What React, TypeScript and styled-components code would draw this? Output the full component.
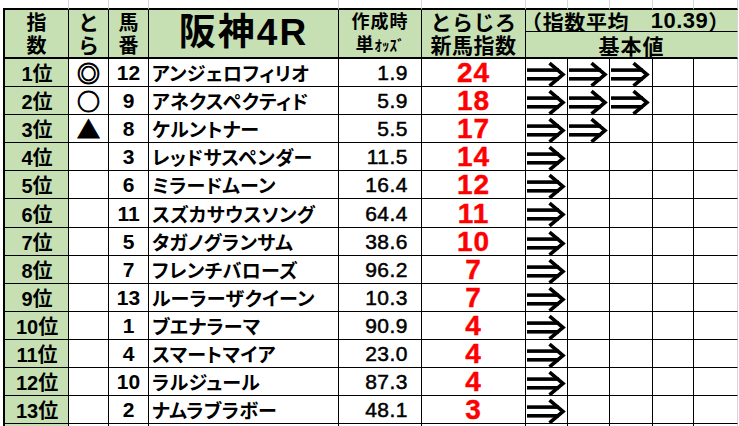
import React from "react";
import styled, { createGlobalStyle } from "styled-components";

const GREEN = "#c6e0b4";
const LINE = "#000";
const GRIDLINE = "#d6d6d6";

const GlobalStyle = createGlobalStyle`
  html, body { margin: 0; padding: 0; background: #fff; }
  body {
    font-family: "Liberation Sans", "Noto Sans CJK JP", sans-serif;
    font-weight: 700;
    color: #000;
    overflow: hidden;
  }
`;

const Sheet = styled.div`
  display: grid;
  grid-template-columns: 66px 40px 40px 190px 83px 104px 42px 42px 43px 41px 44px;
  grid-template-rows: 10px 22px 27px repeat(13, 28.1px) 14px;
  margin-left: 3px;
  width: 735px;
`;

const Base = styled.div<{ $edge?: boolean }>`
  box-sizing: border-box;
  display: flex;
  align-items: center;
  justify-content: center;
  min-width: 0;
  white-space: nowrap;
  border-right: 1px solid ${(p) => (p.$edge ? GRIDLINE : LINE)};
  border-bottom: 1px solid ${LINE};
`;

const GutterCell = styled.div`
  box-sizing: border-box;
  border-right: 1px solid ${GRIDLINE};
  border-bottom: 2px solid ${LINE};
`;

const HeadCell = styled(Base)<{ $lead?: boolean }>`
  grid-row: span 2;
  background: ${GREEN};
  border-bottom-width: 2px;
  border-left: ${(p) => (p.$lead ? `2px solid ${LINE}` : "none")};
`;

const Stack = styled.div<{ $size: number; $lh: number; $ls?: number }>`
  display: flex;
  flex-direction: column;
  align-items: center;
  font-family: "Noto Sans CJK JP", sans-serif;
  font-size: ${(p) => p.$size}px;
  line-height: ${(p) => p.$lh}px;
  letter-spacing: ${(p) => p.$ls ?? 0}px;
  margin-top: -2px;
`;

const Title = styled.div`
  font-family: "Liberation Sans", "Noto Sans CJK JP", sans-serif;
  font-size: 37px;
  letter-spacing: 2px;
  line-height: 1;
  margin-top: -2px;
`;

const Half = styled.span`
  font-size: 15px;
  letter-spacing: 0;
`;

const AvgCell = styled(Base)`
  grid-column: span 5;
  background: ${GREEN};
  font-size: 21px;
  letter-spacing: 0.6px;
  padding-right: 12px;
  font-family: "Liberation Sans", "Noto Sans CJK JP", sans-serif;
`;

const AvgNum = styled.span`
  font-size: 22px;
  letter-spacing: 0.5px;
`;

const BasisCell = styled(Base)`
  grid-column: span 5;
  background: ${GREEN};
  border-bottom-width: 2px;
  font-family: "Noto Sans CJK JP", sans-serif;
  font-size: 21px;
  letter-spacing: 1px;
`;

const RankCell = styled(Base)`
  background: ${GREEN};
  border-left: 2px solid ${LINE};
  font-size: 20px;
  padding-left: 1px;
`;

const MarkCell = styled(Base)`
  font-family: "Noto Sans CJK JP", sans-serif;
  font-size: 23px;
  line-height: 1;
  -webkit-text-stroke: 0.9px #000;
`;

const NumCell = styled(Base)`
  font-size: 21px;
  padding-top: 1px;
`;

const NameCell = styled(Base)`
  justify-content: flex-start;
  padding-left: 3px;
  font-family: "Noto Sans CJK JP", sans-serif;
  font-size: 19px;
  font-feature-settings: "palt";
  letter-spacing: 0.3px;
`;

const OddsCell = styled(Base)`
  justify-content: flex-end;
  padding-right: 13px;
  font-size: 21px;
  font-weight: 400;
  -webkit-text-stroke: 0.5px #000;
  letter-spacing: 0.5px;
  padding-top: 1px;
`;

const ScoreCell = styled(Base)`
  color: #ff0000;
  font-size: 28px;
  letter-spacing: 1px;
  padding-top: 1px;
  -webkit-text-stroke: 0.4px #ff0000;
`;

const ArrowCell = styled(Base)`
  justify-content: flex-start;
  align-items: flex-start;
  overflow: visible;
`;

const ArrowSvg = styled.svg`
  display: block;
  margin: 3px 0 0 1px;
  overflow: visible;
`;

const Arrow = () => (
  <ArrowSvg width="38" height="25" viewBox="0 0 38 25">
    <rect x="0" y="6.3" width="32" height="3.6" fill="#000" />
    <rect x="0" y="15" width="32" height="3.6" fill="#000" />
    <polyline
      points="22.5,1.2 36,12.5 22.5,23.8"
      fill="none"
      stroke="#000"
      strokeWidth="3.6"
      strokeLinejoin="miter"
    />
  </ArrowSvg>
);

type Row = {
  rank: number;
  mark: string;
  no: number;
  name: string;
  odds: string;
  score: number;
  arrows: number;
};

const rows: Row[] = [
  { rank: 1, mark: "◎", no: 12, name: "アンジェロフィリオ", odds: "1.9", score: 24, arrows: 3 },
  { rank: 2, mark: "○", no: 9, name: "アネクスペクティド", odds: "5.9", score: 18, arrows: 3 },
  { rank: 3, mark: "▲", no: 8, name: "ケルントナー", odds: "5.5", score: 17, arrows: 2 },
  { rank: 4, mark: "", no: 3, name: "レッドサスペンダー", odds: "11.5", score: 14, arrows: 1 },
  { rank: 5, mark: "", no: 6, name: "ミラードムーン", odds: "16.4", score: 12, arrows: 1 },
  { rank: 6, mark: "", no: 11, name: "スズカサウスソング", odds: "64.4", score: 11, arrows: 1 },
  { rank: 7, mark: "", no: 5, name: "タガノグランサム", odds: "38.6", score: 10, arrows: 1 },
  { rank: 8, mark: "", no: 7, name: "フレンチバローズ", odds: "96.2", score: 7, arrows: 1 },
  { rank: 9, mark: "", no: 13, name: "ルーラーザクイーン", odds: "10.3", score: 7, arrows: 1 },
  { rank: 10, mark: "", no: 1, name: "ブエナラーマ", odds: "90.9", score: 4, arrows: 1 },
  { rank: 11, mark: "", no: 4, name: "スマートマイア", odds: "23.0", score: 4, arrows: 1 },
  { rank: 12, mark: "", no: 10, name: "ラルジュール", odds: "87.3", score: 4, arrows: 1 },
  { rank: 13, mark: "", no: 2, name: "ナムラブラボー", odds: "48.1", score: 3, arrows: 1 },
];

const ARROW_COLS = 5;

export default function App() {
  return (
    <>
      <GlobalStyle />
      <Sheet>
        {Array.from({ length: 11 }).map((_, i) => (
          <GutterCell key={`g${i}`} />
        ))}

        <HeadCell $lead>
          <Stack $size={20} $lh={23}>
            <span>指</span>
            <span>数</span>
          </Stack>
        </HeadCell>
        <HeadCell>
          <Stack $size={21} $lh={23}>
            <span>と</span>
            <span>ら</span>
          </Stack>
        </HeadCell>
        <HeadCell>
          <Stack $size={20} $lh={23}>
            <span>馬</span>
            <span>番</span>
          </Stack>
        </HeadCell>
        <HeadCell>
          <Title>阪神4R</Title>
        </HeadCell>
        <HeadCell>
          <Stack $size={18} $lh={23} $ls={1}>
            <span>作成時</span>
            <span>
              単<Half>ｵｯｽﾞ</Half>
            </span>
          </Stack>
        </HeadCell>
        <HeadCell>
          <Stack $size={21} $lh={23} $ls={0.5}>
            <span>とらじろ</span>
            <span>新馬指数</span>
          </Stack>
        </HeadCell>
        <AvgCell $edge>
          （指数平均　<AvgNum>10.39</AvgNum>）
        </AvgCell>
        <BasisCell $edge>基本値</BasisCell>

        {rows.map((r) => (
          <React.Fragment key={r.rank}>
            <RankCell>{r.rank}位</RankCell>
            <MarkCell>{r.mark}</MarkCell>
            <NumCell>{r.no}</NumCell>
            <NameCell>{r.name}</NameCell>
            <OddsCell>{r.odds}</OddsCell>
            <ScoreCell>{r.score}</ScoreCell>
            {Array.from({ length: ARROW_COLS }).map((_, i) => (
              <ArrowCell key={i} $edge={i === ARROW_COLS - 1}>
                {i < r.arrows ? <Arrow /> : null}
              </ArrowCell>
            ))}
          </React.Fragment>
        ))}

        <RankCell />
        {Array.from({ length: 10 }).map((_, i) => (
          <Base key={`t${i}`} $edge={i === 9} />
        ))}
      </Sheet>
    </>
  );
}
